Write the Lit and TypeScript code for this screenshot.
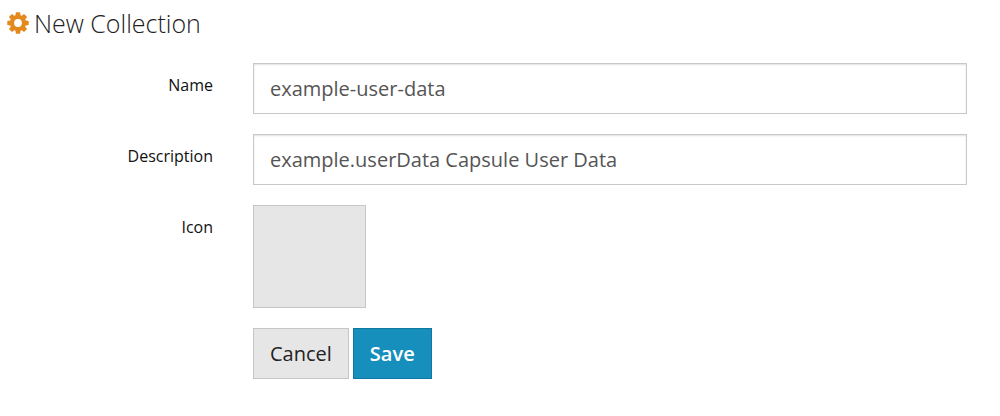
import { LitElement, css, html } from "lit";
import { customElement, state } from "lit/decorators.js";

@customElement("app-root")
export class AppRoot extends LitElement {
  @state() private name = "example-user-data";
  @state() private description = "example.userData Capsule User Data";

  static styles = css`
    :host {
      display: block;
      background: #fff;
      color: #222;
      font-family: "Open Sans", "Noto Sans", sans-serif;
    }
    * {
      box-sizing: border-box;
    }
    .title {
      display: flex;
      align-items: center;
      gap: 5px;
      margin: 0;
      padding: 6px 7px 23px;
      font-size: 25px;
      line-height: 34px;
      font-weight: 300;
    }
    .gear {
      width: 22px;
      height: 22px;
      fill: #e48a1c;
    }
    .form {
      display: grid;
      grid-template-columns: 213px 1fr;
      column-gap: 40px;
      row-gap: 20px;
      padding-right: 33px;
    }
    .label {
      padding-top: 10px;
      font-size: 16px;
      line-height: 24px;
      color: #111;
      text-align: right;
    }
    .input {
      width: 100%;
      height: 51px;
      padding: 0 16px;
      border: 1px solid #c8c8c8;
      border-radius: 0;
      box-shadow: inset 0 1px 2px rgba(0, 0, 0, 0.12);
      background: #fff;
      color: #555;
      font: inherit;
      font-size: 20px;
    }
    .picker {
      width: 113px;
      height: 103px;
      padding: 0;
      border: 1px solid #c6c6c6;
      background: #e6e6e6;
    }
    .actions {
      grid-column: 2;
      display: flex;
      gap: 4px;
    }
    .button {
      height: 51px;
      padding: 0 16px;
      border: 1px solid #c6c6c6;
      background: #e6e6e6;
      color: #222;
      font: inherit;
      font-size: 20px;
    }
    .primary {
      border-color: #0f77a0;
      background: #178fbc;
      color: #fff;
      font-weight: 600;
    }
  `;

  render() {
    return html`
      <h1 class="title">
        <svg class="gear" viewBox="-11 -11 22 22" aria-hidden="true">
          <defs>
            <path id="teeth" d="M-2.700 -6.500L-2.100 -10.700H2.100L2.700 -6.500V6.500L2.100 10.700H-2.100L-2.700 6.500Z" />
            <mask id="hole">
              <rect x="-11" y="-11" width="22" height="22" fill="#fff" />
              <circle r="3.900" fill="#000" />
            </mask>
          </defs>
          <g mask="url(#hole)">
            <circle r="8" />
            <use href="#teeth" />
            <use href="#teeth" transform="rotate(45)" />
            <use href="#teeth" transform="rotate(90)" />
            <use href="#teeth" transform="rotate(135)" />
          </g>
        </svg>
        New Collection
      </h1>
      <form class="form" @submit=${(e: Event) => e.preventDefault()}>
        <label class="label" for="name">Name</label>
        <input class="input" id="name" type="text" .value=${this.name}
          @input=${(e: Event) => (this.name = (e.target as HTMLInputElement).value)} />
        <label class="label" for="description">Description</label>
        <input class="input" id="description" type="text" .value=${this.description}
          @input=${(e: Event) => (this.description = (e.target as HTMLInputElement).value)} />
        <label class="label" for="icon">Icon</label>
        <button class="picker" id="icon" type="button"></button>
        <div class="actions">
          <button class="button" type="button">Cancel</button>
          <button class="button primary" type="submit">Save</button>
        </div>
      </form>
    `;
  }
}
